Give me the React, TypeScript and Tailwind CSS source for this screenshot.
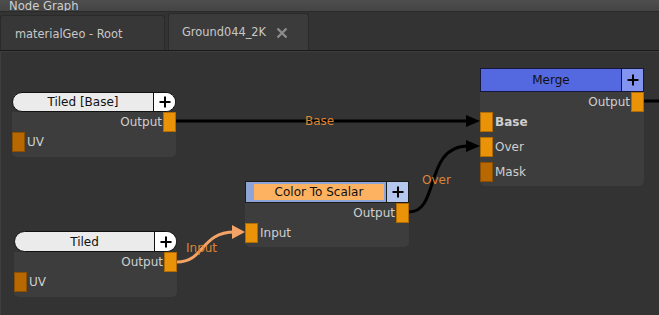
import React from 'react';

const font = { fontFamily: '"DejaVu Sans", Verdana, sans-serif' };

function PlusIcon() {
  return (
    <svg width="12" height="12" viewBox="0 0 12 12">
      <path d="M6 0.5v11M0.5 6h11" stroke="#000" strokeWidth="2" />
    </svg>
  );
}

function Port({ dark }: { dark?: boolean }) {
  return (
    <div
      className={`w-[13px] h-[20px] shrink-0 border ${
        dark ? 'bg-[#b86800] border-[#8a4f00]' : 'bg-[#ea9208] border-[#b06c00]'
      }`}
    />
  );
}

type NodeProps = {
  left: number;
  top: number;
  width: number;
  header: React.ReactNode;
  inputs: { name: string; dark?: boolean; bold?: boolean }[];
  gap?: number;
  bodyH: number;
};

function Node({ left, top, width, header, inputs, bodyH, gap = 0 }: NodeProps) {
  return (
    <div className="absolute" style={{ left, top, width }}>
      {header}
      <div className="bg-[#3d3d3d] rounded-b-[5px] flex flex-col" style={{ height: bodyH }}>
        <div className="flex justify-end items-center h-[20px]">
          <span className="text-[12px] text-[#cfcfcf] mr-[1px]">Output</span>
          <Port />
        </div>
        <div className="flex flex-col" style={{ gap }}>
          {inputs.map((i) => (
            <div key={i.name} className="flex items-center h-[20px]">
              <Port dark={i.dark} />
              <span className={`text-[12px] text-[#cfcfcf] ml-[2px] ${i.bold ? 'font-bold' : ''}`}>
                {i.name}
              </span>
            </div>
          ))}
        </div>
      </div>
    </div>
  );
}

function PillHeader({ title, h }: { title: string; h: number }) {
  return (
    <div
      className="flex border border-[#111] rounded-full overflow-hidden bg-[#ebebeb]"
      style={{ height: h }}
    >
      <div className="flex-1 flex items-center justify-center text-[12px] text-[#111]">{title}</div>
      <div className="w-[22px] flex items-center justify-center bg-white border-l border-[#111]">
        <PlusIcon />
      </div>
    </div>
  );
}

export default function App() {
  return (
    <div className="w-[659px] h-[315px] bg-[#333333] flex flex-col overflow-hidden" style={font}>
      {/* title */}
      <div className="h-[12px] bg-gradient-to-b from-[#4e4e4e] to-[#444] border-b border-[#2a2a2a] overflow-hidden">
        <div className="text-[11.6px] text-[#cfcfcf] ml-[9px] leading-none pt-[1px]">Node Graph</div>
      </div>

      {/* tabs */}
      <div className="h-[38px] bg-[#333] flex items-end gap-[3px]">
        <div className="w-[165px] h-[35px] bg-[#373737] border border-b-0 border-[#2a2a2a] rounded-t-[3px] flex items-center pt-[4px]">
          <span className="text-[11.4px] text-[#c8c8c8] ml-[14px]">materialGeo - Root</span>
        </div>
        <div className="w-[141px] h-[37px] bg-[#3b3b3b] border border-b-0 border-[#2a2a2a] rounded-t-[3px] flex items-center pt-[2px]">
          <span className="text-[11.4px] text-[#c8c8c8] ml-[13px]">Ground044_2K</span>
          <svg width="12" height="12" viewBox="0 0 12 12" className="ml-[10px]">
            <path d="M1.5 1.5l9 9M10.5 1.5l-9 9" stroke="#8c8c8c" strokeWidth="2.4" />
          </svg>
        </div>
      </div>
      <div className="h-[1px] bg-[#1a1a1a]" />
      <div className="h-[1px] bg-[#3c3c3c]" />

      {/* canvas */}
      <div className="relative flex-1">
        <div className="absolute left-0 top-0 bottom-0 w-[1px] bg-[#3e3e3e]" />
        <svg className="absolute inset-0" width="659" height="263">
          {/* Base */}
          <path d="M176 69 H470" stroke="#000" strokeWidth="3" fill="none" />
          <polygon points="466,63 480,69 466,75" fill="#000" />
          {/* Over */}
          <path d="M409 160 C440 160 424 94 468 94" stroke="#000" strokeWidth="3" fill="none" />
          <polygon points="466,88 480,94 466,100" fill="#000" />
          {/* Input */}
          <path d="M177 210 C205 210 200 180 235 180" stroke="#f4a366" strokeWidth="3" fill="none" />
          <polygon points="232,173 245,180 232,187" fill="#f4a366" />
          {/* Merge out */}
          <path d="M644 49 H659" stroke="#000" strokeWidth="3" fill="none" />
        </svg>

        <span className="absolute left-[305px] top-[63px] text-[12px] text-[#dd8434] leading-none">Base</span>
        <span className="absolute left-[422px] top-[122px] text-[12px] text-[#dd8434] leading-none">Over</span>
        <span className="absolute left-[186px] top-[190px] text-[12px] text-[#dd8434] leading-none">Input</span>

        <Node
          left={12}
          top={40}
          width={164}
          bodyH={45}
          header={<PillHeader title="Tiled [Base]" h={20} />}
          inputs={[{ name: 'UV', dark: true }]}
        />
        <Node
          left={14}
          top={179}
          width={163}
          bodyH={45}
          header={<PillHeader title="Tiled" h={21} />}
          inputs={[{ name: 'UV', dark: true }]}
        />
        <Node
          left={245}
          top={129}
          width={164}
          bodyH={44}
          header={
            <div className="h-[22px] flex border border-[#1c1c1c] bg-[#8ca4d8]">
              <div className="flex-1 flex items-center pl-[8px] pr-[2px]">
                <div className="w-full h-[16px] bg-[#fdb262] flex items-center justify-center text-[12px] text-[#111]">
                  Color To Scalar
                </div>
              </div>
              <div className="w-[22px] bg-[#b5c6ef] border-l border-[#1c1c1c] flex items-center justify-center">
                <PlusIcon />
              </div>
            </div>
          }
          inputs={[{ name: 'Input' }]}
        />
        <Node
          left={480}
          top={16}
          width={164}
          bodyH={94}
          gap={5}
          header={
            <div className="h-[24px] flex border border-[#15163a] bg-[#5468e0]">
              <div className="flex-1 flex items-center justify-center text-[12px] text-[#111]">Merge</div>
              <div className="w-[22px] bg-[#8394f0] border-l border-[#15163a] flex items-center justify-center">
                <PlusIcon />
              </div>
            </div>
          }
          inputs={[{ name: 'Base', bold: true }, { name: 'Over' }, { name: 'Mask', dark: true }]}
        />
      </div>
    </div>
  );
}
